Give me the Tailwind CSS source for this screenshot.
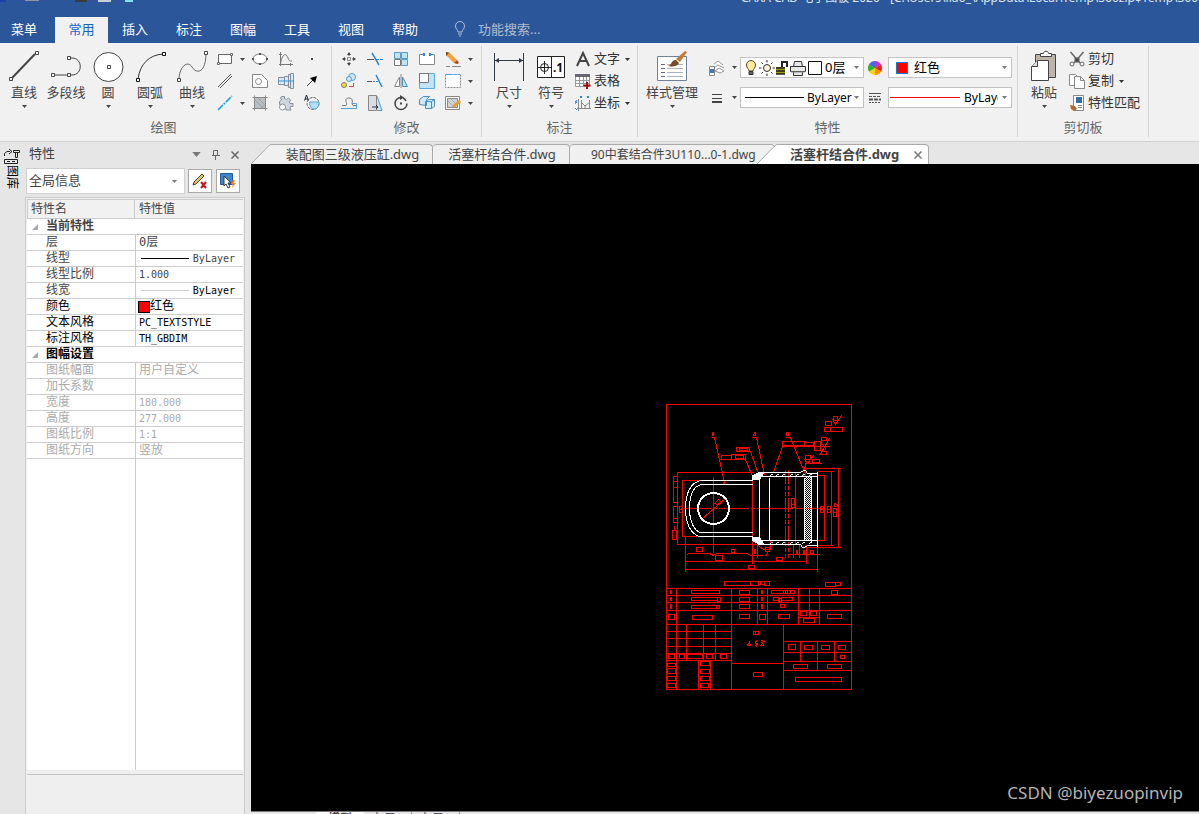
<!DOCTYPE html>
<html lang="zh-CN">
<head>
    <meta charset="UTF-8">
    <meta name="viewport" content="width=device-width, initial-scale=1.0">
    <title>CAXA CAD 电子图板 2020</title>
    <script src="https://cdn.jsdelivr.net/npm/@tailwindcss/browser@4"></script>
</head>
<body class="h-screen flex flex-col overflow-hidden bg-[#e6e6e6] text-[13px] leading-5 text-[#444] font-['Noto_Sans','Noto_Sans_CJK_SC',sans-serif]">
    <svg class="hidden">
        <symbol id="down" viewBox="0 0 5 3"><path d="M0 0h5L2.500 3z" fill="currentColor"/></symbol>
    </svg>

    <header class="bg-[#2b579a] text-white shrink-0">
        <div class="h-[17px] flex items-start justify-between">
            <div class="flex items-start h-[2px] overflow-hidden">
                <span class="w-[6px] h-[2px] bg-[#1c3fa8]"></span>
                <span class="w-[14px] h-px bg-[#8d97a8] ml-[19px]"></span>
                <span class="w-[12px] h-[2px] bg-[#3a3a3a] ml-[36px]"></span>
                <span class="w-[13px] h-[2px] bg-[#c9ced6] ml-[11px]"></span>
                <span class="w-[8px] h-[2px] bg-[#7fe3f5] ml-[14px]"></span>
            </div>
            <div class="w-[458px] h-[6px] flex items-end overflow-hidden text-xs whitespace-nowrap text-[#dfe6f0]">CAXA CAD 电子图板 2020 - [C:\Users\liao_\AppData\Local\Temp\360zip$Temp\360$5\活塞杆结合件.dwg]</div>
        </div>
        <nav class="flex h-[26px] leading-[22px]">
            <button class="w-[55px] pl-[11px] pb-[2px] text-left">菜单</button>
            <button class="w-[53px] pb-[2px] bg-[#f1f1f1] text-[#1a63c4]">常用</button>
            <button class="w-[54px] pb-[2px]">插入</button>
            <button class="w-[54px] pb-[2px]">标注</button>
            <button class="w-[54px] pb-[2px]">图幅</button>
            <button class="w-[54px] pb-[2px]">工具</button>
            <button class="w-[54px] pb-[2px]">视图</button>
            <button class="w-[54px] pb-[2px]">帮助</button>
            <label class="flex items-center pl-[22px] pb-[2px] gap-3">
                <svg class="w-3 h-4" viewBox="0 0 12 16" fill="none" stroke="#b4c0d4"><path d="M4 11c0-2-2.500-3-2.500-6a4.500 4.500 0 0 1 9 0c0 3-2.500 4-2.500 6zM4 13h4M5 15h2"/></svg>
                <input type="text" placeholder="功能搜索..." class="w-40 h-6 bg-transparent outline-none placeholder:text-[#b4bccb]">
            </label>
        </nav>
    </header>

    <section class="h-[99px] shrink-0 flex bg-[#f1f1f1] border-b border-[#d2d2d2] pt-[3px] pb-1">
        <!-- 绘图 -->
        <div class="w-[332px] shrink-0 border-r border-[#d2d2d2] flex flex-col">
            <div class="flex h-[70px] pl-[3px] pt-[2px]">
                <button class="w-[42px] pt-[2px] flex flex-col items-center whitespace-nowrap">
                    <svg class="w-8 h-8" viewBox="0 0 32 32" fill="#fff" stroke="#444"><path d="M4 28L27 4" stroke-width="2"/><path d="M1.500 27.500h3v3h-3zM27.500 1.500h3v3h-3z"/></svg>
                    <span>直线</span>
                    <svg class="w-[5px] h-[3px] mt-[3px]"><use href="#down"/></svg>
                </button>
                <button class="w-[42px] pt-[2px] flex flex-col items-center whitespace-nowrap">
                    <svg class="w-8 h-8" viewBox="0 0 32 32" fill="none" stroke="#444"><path d="M3 25H19M19 8h3c11 0 11 17 0 17h-3"/><path fill="#fff" d="M1.500 23.500h3v3h-3zM17.500 23.500h3v3h-3zM17.500 6.500h3v3h-3z"/></svg>
                    <span>多段线</span>
                </button>
                <button class="w-[42px] pt-[2px] flex flex-col items-center whitespace-nowrap">
                    <svg class="w-8 h-8" viewBox="0 0 32 32" fill="#fff" stroke="#444"><circle cx="16.500" cy="17" r="14.500"/><path d="M15.500 15.500h3v3h-3z"/></svg>
                    <span>圆</span>
                    <svg class="w-[5px] h-[3px] mt-[3px]"><use href="#down"/></svg>
                </button>
                <button class="w-[42px] pt-[2px] flex flex-col items-center whitespace-nowrap">
                    <svg class="w-8 h-8" viewBox="0 0 32 32" fill="none" stroke="#333"><path d="M4 29C6 14 15 5 29 4"/><path fill="#fff" stroke="#111" d="M2.500 28.500h3v3h-3zM28.500 2.500h3v3h-3z"/></svg>
                    <span>圆弧</span>
                    <svg class="w-[5px] h-[3px] mt-[3px]"><use href="#down"/></svg>
                </button>
                <button class="w-[42px] pt-[2px] flex flex-col items-center whitespace-nowrap">
                    <svg class="w-8 h-8" viewBox="0 0 32 32" fill="none" stroke="#666"><path d="M3 30C3 16 12 10 16 17S30 24 30 3"/><path fill="#fff" stroke="#444" d="M1.500 28.500h3v3h-3zM28.500 1.500h3v3h-3z"/></svg>
                    <span>曲线</span>
                    <svg class="w-[5px] h-[3px] mt-[3px]"><use href="#down"/></svg>
                </button>
                <div class="grid grid-cols-[35px_26px_26px_26px] grid-rows-3 h-[66px] pl-1">
                    <button class="flex items-center gap-[7px]">
                        <svg class="w-4 h-4" viewBox="0 0 16 16" fill="#fff" stroke="#666"><path d="M1.500 3.500h13v9h-13z"/><path d="M.5 11.500h2v2h-2zM13.500 2.500h2v2h-2z"/></svg>
                        <svg class="w-[5px] h-[3px]"><use href="#down"/></svg>
                    </button>
                    <button><svg class="w-4 h-4" viewBox="0 0 16 16" fill="#fff" stroke="#777"><ellipse cx="8" cy="8" rx="7" ry="5"/><path fill="#555" stroke="none" d="M0 7h2v2H0zM14 7h2v2h-2zM7 2h2v2H7zM7 12h2v2H7z"/></svg></button>
                    <button><svg class="w-4 h-4" viewBox="0 0 16 16" fill="none" stroke="#777"><path d="M2.500 1v14M1 13.500h14M1 3.500h3M12.500 12v3M2.500 13C4 3 8 1 10 7c1 3 2 3 4 3"/></svg></button>
                    <button><svg class="w-4 h-4" viewBox="0 0 16 16" fill="#444"><path d="M7 7h2v2H7z"/></svg></button>
                    <button><svg class="w-4 h-4" viewBox="0 0 16 16" fill="none" stroke="#555"><path d="M1 14L14 1M3 15L15 3"/></svg></button>
                    <button><svg class="w-4 h-4" viewBox="0 0 16 16" fill="#fff" stroke="#888"><path d="M.5 1.500h9l6 6v7H.5z"/><circle cx="6.500" cy="8.500" r="3"/></svg></button>
                    <button><svg class="w-4 h-4" viewBox="0 0 16 16" fill="#d5eaf8" stroke="#84909c"><path d="M.5 4.500h6v7h-6zM6.500 3.500h4v9h-4zM10.500 1.500h2v13h-2zM12.500 .5h3v15h-3z"/><path d="M0 8h16" stroke="#3b95d6"/></svg></button>
                    <button><svg class="w-4 h-4" viewBox="0 0 16 16"><path d="M3 13l6-6" stroke="#444"/><path d="M13 3L11 10 6 5z"/></svg></button>
                    <button class="flex items-center gap-[7px]">
                        <svg class="w-4 h-4" viewBox="0 0 16 16" fill="none" stroke="#0c9be0" stroke-width="1.500"><path d="M1 15L15 1" stroke-dasharray="7 1 2 1"/></svg>
                        <svg class="w-[5px] h-[3px]"><use href="#down"/></svg>
                    </button>
                    <button><svg class="w-4 h-4" viewBox="0 0 16 16" fill="#b9bec2" stroke="#888"><path d="M2.500 2.500h11v11h-11zM.5 2.500h15M.5 13.500h15M2.500 .5v15M13.500 .5v15"/><path d="M3 5l8 8M6 3l7 7M9 13l4-4" stroke="#9da3a7"/></svg></button>
                    <button><svg class="w-4 h-4" viewBox="0 0 16 16" fill="#cfd6de" stroke="#8a939c"><path d="M3.500 1.500h3v2l2 1 2-1.500 2 2-1 2 .5 1.500h3v3h-2.500l-.5 1.500 1 2H8c0-3-1.500-5-4-5L1.500 9.500V6.500l2-1.500-1-2z"/><circle cx="4.500" cy="12" r="3" fill="#fff"/></svg></button>
                    <button><svg class="w-4 h-4" viewBox="0 0 16 16" fill="none" stroke="#666"><circle cx="9" cy="8.500" r="6" stroke-dasharray="3 1"/><path d="M5.500 7h9.500c0 5-2 7-5 7s-4.500-3-4.500-7z" fill="#aee0f7" stroke="#5fa8cf"/><path d="M.5 5.500L2.500 0l2 5.500M1 4h3" stroke="#222"/></svg></button>
                </div>
            </div>
            <div class="text-center text-[#666] pt-[2px] pr-1">绘图</div>
        </div>

        <!-- 修改 -->
        <div class="w-[150px] shrink-0 border-r border-[#d2d2d2] flex flex-col">
            <div class="flex h-[70px] pl-[9px] pt-[2px]">
                <div class="grid grid-cols-[26px_26px_26px_26px_23px] grid-rows-3 h-[66px] justify-items-start">
                    <button><svg class="w-4 h-4" viewBox="0 0 16 16" fill="none" stroke="#555"><path d="M6.500 6.500h3v3h-3z" stroke="#888"/><path d="M8 2v3M8 11v3M2 8h3M11 8h3"/><path fill="#444" stroke="none" d="M6 4l2-3 2 3zM6 12l2 3 2-3zM4 6L1 8l3 2zM12 6l3 2-3 2z"/></svg></button>
                    <button><svg class="w-4 h-4" viewBox="0 0 16 16" fill="none" stroke="#2f86cf"><path d="M0 8.500h7" stroke="#555"/><path d="M5 2l7 12" stroke-width="1.500"/><path d="M9 8.500h7" stroke-dasharray="3 1"/></svg></button>
                    <button><svg class="w-4 h-4" viewBox="0 0 16 16" fill="#bfe3f7" stroke="#5a9cc8"><path d="M1.500 1.500h6v6h-6zM8.500 1.500h6v6h-6zM8.500 8.500h6v6h-6z"/><path d="M1.500 8.500h6v6h-6z" fill="#fff" stroke="#777"/></svg></button>
                    <button><svg class="w-4 h-4" viewBox="0 0 16 16" fill="#fff" stroke="#888"><path d="M3 3.500H.5v10h15v-10H13"/><path d="M2 3.500h3M11 3.500h3" stroke="#2f86cf"/><path d="M4 2h2v3H4zM10 2h2v3h-2z" fill="#2f86cf" stroke="none"/></svg></button>
                    <button><svg class="w-4 h-4" viewBox="0 0 16 16"><path d="M1 1l3 0 8 8-3 3-8-8z" fill="#f0a23a"/><path d="M1 1v4l3-3z" fill="#6a4a2a"/><path d="M9 12l3-3 2 3-2 1z" fill="#a3482d"/><path d="M1 15.500h4M7 15.500h9" stroke="#888"/></svg></button>

                    <button><svg class="w-4 h-4" viewBox="0 0 16 16" fill="#cfeafa" stroke="#4f9fd0"><circle cx="11" cy="4" r="3.500"/><circle cx="8" cy="6" r="2.500"/><circle cx="3" cy="12" r="2.500" fill="#f5e320" stroke="#777"/><path d="M8 13.500h4.500V10" fill="none" stroke="#c44"/></svg></button>
                    <button><svg class="w-4 h-4" viewBox="0 0 16 16" fill="none" stroke="#555"><path d="M0 8.500h5"/><path d="M6 8.500h6" stroke="#2f86cf" stroke-dasharray="2 1"/><path d="M9 2l6 12" stroke="#2f86cf" stroke-width="1.500"/></svg></button>
                    <button><svg class="w-4 h-4" viewBox="0 0 16 16" fill="#fff" stroke="#888"><path d="M6.500 4v9.500h-5zM8 1v14"/><path d="M9.500 4v9.500h5z" fill="#bfe3f7" stroke="#4f8db8"/></svg></button>
                    <button><svg class="w-4 h-4" viewBox="0 0 16 16" fill="#bfe3f7" stroke="#5aa9d6"><path d="M.5 .5h15v15H.5z"/><path d="M.5 .5h9v9h-9z" fill="#fff" stroke="#777"/></svg></button>
                    <button><svg class="w-4 h-4" viewBox="0 0 16 16" fill="#fff" stroke="#888"><path d="M.5 1.500h15v13H.5z" stroke-dasharray="2 1"/><path d="M1 1.500h14" stroke="#4fa8e0" stroke-dasharray="3 1"/></svg></button>

                    <button><svg class="w-4 h-4" viewBox="0 0 16 16" fill="none" stroke="#777"><path d="M1 10.500h4c2-2-1-4 0-6s5-2 6 0-1 4 1 6h3"/><path d="M0 13.500h15.500v-5H11" stroke="#4f9fd0"/></svg></button>
                    <button><svg class="w-4 h-4" viewBox="0 0 16 16" fill="#d9dee2" stroke="#888"><path d="M1.500 .5h8v15h-8z"/><path d="M10 1l5 14.500h-5" fill="#bfe3f7" stroke="#4f9fd0"/><path d="M5 12h6M9 10l2 2-2 2" fill="none" stroke="#333"/></svg></button>
                    <button><svg class="w-4 h-4" viewBox="0 0 16 16" fill="none" stroke="#444"><path d="M8 2.500a6 6 0 1 0 6 6M10 3a6 6 0 0 1 3 3" stroke-width="1.500"/><path d="M7 0l4 2.500L7 5zM7 7.500h2v2H7z" fill="#444" stroke="none"/></svg></button>
                    <button><svg class="w-4 h-4" viewBox="0 0 16 16" fill="#cfeafa" stroke="#4f8db8"><path d="M.5 4.500l4-3h6l-3 3v6l-7-1zM6.500 6.500h6v7h-6zM12.500 6.500l3-2v7l-3 2M6.500 6.500l3-2h6"/></svg></button>
                    <button><svg class="w-4 h-4" viewBox="0 0 16 16" fill="#d0d3d5" stroke="#888"><path d="M.5 1.500h14v13H.5z" fill="#fff"/><path d="M2.500 3.500h10v9h-10z"/><path d="M3 6l6 6M6 4l6 6" stroke="#aaa"/><path d="M7 11l7-6 2 2-7 6z" fill="#e79b35" stroke="none"/></svg></button>
                </div>
                <div class="grid grid-rows-3 h-[66px]">
                    <button aria-label="删除选项"><svg class="w-[5px] h-[3px]"><use href="#down"/></svg></button>
                    <button aria-label="打断选项"><svg class="w-[5px] h-[3px]"><use href="#down"/></svg></button>
                    <button aria-label="编辑选项"><svg class="w-[5px] h-[3px]"><use href="#down"/></svg></button>
                </div>
            </div>
            <div class="text-center text-[#666] pt-[2px]">修改</div>
        </div>

        <!-- 标注 -->
        <div class="w-[156px] shrink-0 border-r border-[#d2d2d2] flex flex-col">
            <div class="flex h-[70px] pl-[6px] pt-[2px]">
                <button class="w-[42px] pt-[2px] flex flex-col items-center">
                    <svg class="w-8 h-8" viewBox="0 0 32 32" fill="none" stroke="#333a48"><path d="M1.500 3v28M30.500 3v28M2 10.500h28"/><path d="M6 8l-4 2.500L6 13zM26 8l4 2.500-4 2.500z" fill="#333a48" stroke="none"/></svg>
                    <span>尺寸</span>
                    <svg class="w-[5px] h-[3px] mt-[3px]"><use href="#down"/></svg>
                </button>
                <button class="w-[42px] pt-[2px] flex flex-col items-center">
                    <svg class="w-8 h-8" viewBox="0 0 32 32" fill="#fff" stroke="#222"><path d="M2.500 6.500h27v21h-27zM16.500 6.500v21"/><circle cx="9.500" cy="17.500" r="4"/><path d="M3 17.500h13M9.500 11v13"/><text x="18" y="22" font-size="12" font-weight="bold" fill="#111" stroke="none">.1</text></svg>
                    <span>符号</span>
                    <svg class="w-[5px] h-[3px] mt-[3px]"><use href="#down"/></svg>
                </button>
                <div class="grid grid-rows-3 h-[66px] pl-[3px] text-[#333]">
                    <button class="flex items-center gap-[3px]">
                        <svg class="w-4 h-4" viewBox="0 0 16 16" fill="none" stroke="#444" stroke-width="2"><path d="M2 15L8 2l6 13M4 10h8"/></svg>
                        <span class="pb-[2px]">文字</span>
                        <svg class="w-[5px] h-[3px] ml-[2px]"><use href="#down"/></svg>
                    </button>
                    <button class="flex items-center gap-[3px]">
                        <svg class="w-4 h-4" viewBox="0 0 16 16" fill="#fff" stroke="#999"><path d="M.5 1.500h14v12H.5zM.5 7.500h14M.5 10.500h14M4.500 4v10M8.500 4v10M11.500 4v6"/><path d="M0 1h15v3H0z" fill="#667" stroke="none"/><path d="M12 9v7M8.500 12.500h7" stroke="#a01010" stroke-width="2"/></svg>
                        <span class="pb-[2px]">表格</span>
                    </button>
                    <button class="flex items-center gap-[3px]">
                        <svg class="w-4 h-4" viewBox="0 0 16 16" fill="none" stroke="#888"><path d="M3.500 4v12M2 13.500h14M6.500 5v9M14.500 5v9M6 7l4 4 5-4M10 11v3"/><path d="M5 1l2 2M7 1L5 3M12 1l2 2M14 1l-2 2M0 6l2 2M2 5L0 9M0 13l2 2" stroke="#2f86cf"/></svg>
                        <span class="pb-[2px]">坐标</span>
                        <svg class="w-[5px] h-[3px] ml-[2px]"><use href="#down"/></svg>
                    </button>
                </div>
            </div>
            <div class="text-center text-[#666] pt-[2px]">标注</div>
        </div>

        <!-- 特性 -->
        <div class="w-[380px] shrink-0 border-r border-[#d2d2d2] flex flex-col">
            <div class="flex h-[70px] pl-2 pt-[2px]">
                <button class="w-[52px] pt-[2px] flex flex-col items-center whitespace-nowrap">
                    <svg class="w-8 h-8" viewBox="0 0 32 32" fill="#fff" stroke="#6d8296"><path d="M1.500 6.500h29v24h-29z"/><path d="M5 14.500h4M5 18.500h4M5 22.500h4M5 26.500h4" stroke="#667"/><path d="M11 14.500h16M11 18.500h16M11 22.500h16M11 26.500h16" stroke="#aab4c8"/><path d="M20 9l9-8 2 1-7 10z" fill="#c47a35" stroke="none"/><path d="M12 16c4-1 3-6 8-6l3 3c-2 4-7 4-11 3z" fill="#7a4a20" stroke="none"/></svg>
                    <span>样式管理</span>
                    <svg class="w-[5px] h-[3px] mt-[3px]"><use href="#down"/></svg>
                </button>
                <div class="flex flex-col gap-[9px] pt-[9px] pl-[11px]">
                    <div class="flex items-center h-[21px]">
                        <button class="flex items-center gap-[7px] w-[31px]">
                            <svg class="w-4 h-4" viewBox="0 0 16 16" fill="#fff" stroke="#999"><path d="M5 4l4-3 5 4M5 8l4-3 6 3M6 11l4-3 5 3-4 2z"/><path d="M.5 6.500h5v9h-5z" stroke="#889"/><path d="M1 9h4v4H1z" fill="#3b78b8" stroke="none"/></svg>
                            <svg class="w-[5px] h-[3px]"><use href="#down"/></svg>
                        </button>
                        <div class="w-[124px] h-[21px] flex items-center bg-white border border-[#c3c3c3] pl-[3px] pr-1">
                            <svg class="w-[14px] h-4 shrink-0" viewBox="0 0 14 16" fill="#ffeaa0" stroke="#5a4a20"><path d="M5 11c0-2-2.500-3-2.500-6a4.500 4.500 0 0 1 9 0c0 3-2.500 4-2.500 6z"/><path d="M5 11.500h4v3H5z" fill="#666" stroke="#333"/></svg>
                            <svg class="w-4 h-4 shrink-0 ml-px" viewBox="0 0 16 16" fill="#fff3d6" stroke="#333"><circle cx="8" cy="8" r="3.500"/><path d="M8 0v2.500M8 13.500V16M0 8h2.500M13.500 8H16M2.500 2.500L4 4M12 12l1.500 1.500M2.500 13.500L4 12M12 4l1.500-1.500"/></svg>
                            <svg class="w-[14px] h-4 shrink-0" viewBox="0 0 14 16" fill="none" stroke="#222" stroke-width="2"><path d="M7 7V2h5v5"/><path d="M1 7h9v7H1z" fill="#9a9a10" stroke="none"/><path d="M1 8h9M1 11h9M1 14h9" stroke-width="1.500"/></svg>
                            <svg class="w-4 h-4 shrink-0 ml-px" viewBox="0 0 16 16" fill="#e8e8e8" stroke="#333"><path d="M3.500 6.500l1-5h7l1 5M.5 6.500h15v5H.5zM3.500 11.500h9v4h-9z"/><path d="M1 12h14" stroke="#888"/></svg>
                            <svg class="w-4 h-4 shrink-0 ml-px" viewBox="0 0 16 16" fill="#fff" stroke="#111"><path d="M1.500 1.500h13v13h-13z"/></svg>
                            <select aria-label="图层" class="appearance-none flex-1 min-w-0 h-[19px] pl-[2px] leading-[19px] text-black bg-transparent"><option>0层</option></select>
                            <svg class="w-[5px] h-[3px] shrink-0 text-[#777]"><use href="#down"/></svg>
                        </div>
                        <button aria-label="颜色" class="w-6 pr-[2px] flex justify-center">
                            <svg class="w-4 h-4" viewBox="0 0 16 16"><circle cx="8" cy="8" r="7" fill="#ffd400"/><path d="M8 8V1a7 7 0 0 1 6 3.500z" fill="#d42ad0"/><path d="M8 8l6-3.500a7 7 0 0 1 0 7z" fill="#f02020"/><path d="M8 8l6 3.500A7 7 0 0 1 8 15z" fill="#ff8c00"/><path d="M8 8L2 11.500a7 7 0 0 1 0-7z" fill="#27b43a"/><path d="M8 8L2 4.500A7 7 0 0 1 8 1z" fill="#4565f0"/></svg>
                        </button>
                        <div class="w-[124px] h-[21px] flex items-center bg-white border border-[#c3c3c3] pl-[7px] pr-1">
                            <span class="w-3 h-3 bg-[#ff0000] border border-[#1c78c8] shrink-0"></span>
                            <select aria-label="当前颜色" class="appearance-none flex-1 min-w-0 h-[19px] pl-[6px] leading-[19px] text-black bg-transparent"><option>红色</option></select>
                            <svg class="w-[5px] h-[3px] shrink-0 text-[#777]"><use href="#down"/></svg>
                        </div>
                    </div>
                    <div class="flex items-center h-[21px]">
                        <button class="flex items-center gap-[7px] w-[31px]">
                            <svg class="w-4 h-4" viewBox="0 0 16 16" stroke="#444"><path d="M3 4.500h10M3 8.500h10"/><path d="M3 12h10" stroke-width="2"/></svg>
                            <svg class="w-[5px] h-[3px]"><use href="#down"/></svg>
                        </button>
                        <div class="w-[124px] h-[21px] flex items-center bg-white border border-[#c3c3c3] pl-1 pr-1">
                            <span class="w-[59px] h-px bg-black shrink-0"></span>
                            <select aria-label="线型" class="appearance-none flex-1 min-w-0 h-[19px] pl-[3px] text-xs leading-[19px] text-black bg-transparent"><option>ByLayer</option></select>
                            <svg class="w-[5px] h-[3px] shrink-0 text-[#777]"><use href="#down"/></svg>
                        </div>
                        <button aria-label="线宽" class="w-6 pr-[2px] flex justify-center">
                            <svg class="w-3 h-4" viewBox="0 0 12 16" stroke="#555"><path d="M0 3.500h12"/><path d="M0 6.500h12" stroke-dasharray="3 1"/><path d="M0 9.500h12" stroke-width="2" stroke-dasharray="4 1"/><path d="M0 12.500h12" stroke-dasharray="2 1"/></svg>
                        </button>
                        <div class="w-[124px] h-[21px] flex items-center bg-white border border-[#c3c3c3] pl-px pr-1">
                            <span class="w-[70px] h-px bg-[#ff0000] shrink-0"></span>
                            <select aria-label="线宽样式" class="appearance-none w-[38px] h-[19px] pl-1 text-xs leading-[19px] text-black bg-transparent"><option>ByLayer</option></select>
                            <svg class="w-[5px] h-[3px] shrink-0 ml-auto text-[#777]"><use href="#down"/></svg>
                        </div>
                    </div>
                </div>
            </div>
            <div class="text-center text-[#666] pt-[2px]">特性</div>
        </div>

        <!-- 剪切板 -->
        <div class="w-[131px] shrink-0 border-r border-[#d2d2d2] flex flex-col">
            <div class="flex h-[70px] pl-[5px] pt-[2px]">
                <button class="w-[42px] pt-[2px] flex flex-col items-center">
                    <svg class="w-8 h-8" viewBox="0 0 32 32" fill="#bdb4aa" stroke="#444"><path d="M7.500 4.500h20v23h-20z"/><path d="M12.500 6.500v-3h3c0-3 5-3 5 0h3v3z" fill="#fff"/><path d="M9.500 10.500h11v20h-17v-14z" fill="#fff"/><path d="M9.500 10.500v6h-6" fill="#ddd"/></svg>
                    <span>粘贴</span>
                    <svg class="w-[5px] h-[3px] mt-[3px]"><use href="#down"/></svg>
                </button>
                <div class="grid grid-rows-3 h-[66px] pl-1 text-[#333]">
                    <button class="flex items-center gap-[3px]">
                        <svg class="w-4 h-4" viewBox="0 0 16 16" fill="none" stroke="#666"><path d="M1.500 1L11 12M14.500 1L5 12" stroke-width="1.500"/><circle cx="3" cy="13" r="2"/><circle cx="13" cy="13" r="2"/><path d="M6 7h4v4H6z" fill="#444"/></svg>
                        <span class="pb-[2px]">剪切</span>
                    </button>
                    <button class="flex items-center gap-[3px]">
                        <svg class="w-4 h-4" viewBox="0 0 16 16" fill="#fff" stroke="#888"><path d="M.5 1.500h6l3 3v8h-9z"/><path d="M5.500 3.500h6l4 4v8h-10zM11.500 3.500v4h4"/></svg>
                        <span class="pb-[2px]">复制</span>
                        <svg class="w-[5px] h-[3px] ml-[2px]"><use href="#down"/></svg>
                    </button>
                    <button class="flex items-center gap-[3px]">
                        <svg class="w-4 h-4" viewBox="0 0 16 16" fill="#fff" stroke="#888"><path d="M4.500 .5h10v15h-10z"/><path d="M7 2h6v6H7z" fill="#2f6ea8" stroke="none"/><path d="M9 10.500h4M9 12.500h4"/><path d="M1 10l5 1 2 3-3 2-3-2z" fill="#b8672c" stroke="none"/></svg>
                        <span class="pb-[2px]">特性匹配</span>
                    </button>
                </div>
            </div>
            <div class="text-center text-[#666] pt-[2px]">剪切板</div>
        </div>
    </section>

    <main class="flex flex-1 min-h-0">
        <div class="w-[25px] shrink-0 pt-[7px] pl-1">
            <button class="w-4 flex flex-col items-center text-black">
                <svg class="w-4 h-4" viewBox="0 0 16 16" fill="none" stroke="#222"><path d="M.5 7V4.500L3 2.500h3M5 0l3 2.500L5 5M9.500 1.500h6v2h-6zM11.500 3.500v5h2v-5M.5 10.500h13v4H.5zM3 12.500h3M8 12.500h3"/></svg>
                <span class="text-xs leading-4 [writing-mode:vertical-rl] [text-orientation:sideways]">图库</span>
            </button>
        </div>

        <aside class="w-[220px] shrink-0 flex flex-col">
            <div class="h-[25px] flex items-center pl-1 pr-px">
                <h2 class="flex-1 pb-[3px]">特性</h2>
                <button aria-label="菜单" class="w-[19px] flex justify-center"><svg class="w-[9px] h-[5px] text-[#777]"><use href="#down"/></svg></button>
                <button aria-label="固定" class="w-[19px] flex justify-center"><svg class="w-[10px] h-[10px]" viewBox="0 0 10 10" fill="none" stroke="#666"><path d="M2.500 5.500v-5h4v5M6.500 0v5M1 5.500h8M4.500 6v4"/></svg></button>
                <button aria-label="关闭" class="w-[19px] flex justify-center"><svg class="w-2 h-2" viewBox="0 0 8 8" stroke="#666" stroke-width="1.500"><path d="M.5 .5l7 7M7.500 .5l-7 7"/></svg></button>
            </div>
            <div class="flex items-center h-7 pl-px gap-[3px]">
                <div class="w-[159px] h-[26px] flex items-center bg-white border border-[#d0d0d0] pl-[2px] pr-[7px]">
                    <select aria-label="对象" class="appearance-none flex-1 pb-[2px] leading-5 bg-transparent"><option>全局信息</option></select>
                    <svg class="w-[5px] h-[3px] text-[#777]"><use href="#down"/></svg>
                </div>
                <button aria-label="取消选择" class="w-6 h-6 bg-white border border-[#aaa] flex items-center justify-center">
                    <svg class="w-4 h-4" viewBox="0 0 16 16"><path d="M1 12l1-3 8-8 2 2-8 8z" fill="#f0c060" stroke="#444"/><path d="M9 9l5 6M14 9l-5 6" stroke="#c21818" stroke-width="2"/></svg>
                </button>
                <button aria-label="快速选择" class="w-6 h-6 ml-px bg-white border border-[#aaa] flex items-center justify-center">
                    <svg class="w-4 h-4" viewBox="0 0 16 16"><path d="M.5 .5h12v11H.5z" fill="#3f87cc" stroke="#235a94"/><path d="M4 3v10l2-2 2 4 2-1-2-4h3z" fill="#fff" stroke="#333"/><path d="M13 7l-2 4h2l-1 4 4-5h-2l1-3z" fill="#f08a20"/></svg>
                </button>
            </div>
            <div class="flex-1 min-h-0 mt-[2px] flex flex-col border-x border-t border-[#ccc] bg-[#efefef] px-px pt-px">
                <table class="w-full table-fixed border-separate border-spacing-0 bg-white text-xs leading-[15px] font-['DejaVu_Sans_Mono','Noto_Sans_CJK_SC',monospace] [&_td]:border-b [&_td]:border-[#ccc] [&_td]:p-0 [&_td]:whitespace-nowrap [&_td:first-child]:pl-[19px] [&_td+td]:border-l [&_td+td]:pl-[3px]">
                    <colgroup><col class="w-[108px]"><col></colgroup>
                    <thead>
                        <tr class="text-left bg-[#f1f1f1]">
                            <th class="font-normal leading-[18px] h-5 border border-[#ccc] pl-[3px]">特性名</th>
                            <th class="font-normal leading-[18px] border-y border-[#ccc] pl-1">特性值</th>
                        </tr>
                    </thead>
                    <tbody>
                        <tr class="font-bold"><td colspan="2"><span class="inline-block w-[14px] -ml-[14px]"><svg class="w-[6px] h-[6px] inline-block" viewBox="0 0 6 6"><path d="M6 0v6H0z" fill="#aaa"/></svg></span>当前特性</td></tr>
                        <tr><td>层</td><td>0层</td></tr>
                        <tr><td>线型</td><td class="text-[10px]"><div class="flex items-center justify-between pl-[2px] pr-2"><span class="w-12 h-px bg-black"></span>ByLayer</div></td></tr>
                        <tr><td>线型比例</td><td class="text-[10px]">1.000</td></tr>
                        <tr><td>线宽</td><td class="text-[10px] text-black"><div class="flex items-center justify-between pl-[2px] pr-2"><span class="w-12 h-px bg-[#ccc]"></span>ByLayer</div></td></tr>
                        <tr class="text-black"><td>颜色</td><td><div class="flex items-center -ml-px"><span class="w-3 h-3 bg-[#ff0000] border border-black"></span>红色</div></td></tr>
                        <tr class="text-black"><td>文本风格</td><td class="text-[10px]">PC_TEXTSTYLE</td></tr>
                        <tr class="text-black"><td>标注风格</td><td class="text-[10px]">TH_GBDIM</td></tr>
                        <tr class="font-bold text-black"><td colspan="2"><span class="inline-block w-[14px] -ml-[14px]"><svg class="w-[6px] h-[6px] inline-block" viewBox="0 0 6 6"><path d="M6 0v6H0z" fill="#aaa"/></svg></span>图幅设置</td></tr>
                        <tr class="text-[#aaa]"><td>图纸幅面</td><td>用户自定义</td></tr>
                        <tr class="text-[#aaa]"><td>加长系数</td><td></td></tr>
                        <tr class="text-[#aaa]"><td>宽度</td><td class="text-[10px]">180.000</td></tr>
                        <tr class="text-[#aaa]"><td>高度</td><td class="text-[10px]">277.000</td></tr>
                        <tr class="text-[#aaa]"><td>图纸比例</td><td class="text-[10px]">1:1</td></tr>
                        <tr class="text-[#aaa]"><td>图纸方向</td><td>竖放</td></tr>
                    </tbody>
                </table>
                <div class="flex-1 bg-white flex"><div class="w-[109px] border-r border-[#ccc]"></div></div>
                <div class="h-11 shrink-0 pt-1"><div class="border-t border-[#c4c4c4]"></div></div>
            </div>
        </aside>

        <section class="flex-1 min-w-0 flex flex-col pl-[6px]">
            <div class="h-[22px] shrink-0 flex pt-[2px] leading-[19px] whitespace-nowrap" role="tablist">
                <svg class="w-5 h-5 shrink-0" viewBox="0 0 20 20"><path d="M0 20L18 1.500 20 .5V20z" fill="#f0f0f0"/><path d="M0 20L18 1.500 20 .5" fill="none" stroke="#aaa"/></svg>
                <button class="w-[162px] shrink-0 bg-[#f0f0f0] border-t border-r border-[#aaa] rounded-tr-sm pl-[2px]">装配图三级液压缸.dwg</button>
                <button class="w-[137px] shrink-0 bg-[#f0f0f0] border-t border-r border-[#aaa] rounded-t-sm pl-[2px]">活塞杆结合件.dwg</button>
                <button class="w-[187px] shrink-0 bg-[#f0f0f0] border-t border-[#aaa] rounded-tl-sm text-left text-xs leading-[19px] pl-[21px]">90中套结合件3U110...0-1.dwg</button>
                <svg class="w-5 h-5 shrink-0" viewBox="0 0 20 20"><path d="M0 .5h20V20H0z" fill="#f0f0f0"/><path d="M0 20L18 1.500 20 .5V20z" fill="#fff"/><path d="M0 .5h15l3 2M0 20L18 1.500 20 .5" fill="none" stroke="#aaa"/></svg>
                <button class="w-[152px] shrink-0 bg-white border-t border-r border-[#aaa] rounded-tr-sm flex items-center justify-between pl-[13px] pr-[6px] font-bold">活塞杆结合件.dwg
                    <svg class="w-2 h-2" viewBox="0 0 8 8" stroke="#777" stroke-width="1.500"><path d="M.5 .5l7 7M7.500 .5l-7 7"/></svg>
                </button>
            </div>

            <div class="relative flex-1 min-h-0 bg-black overflow-hidden">
                <svg class="absolute left-[409px] top-[234px] w-[200px] h-[300px]" viewBox="0 0 200 300" fill="none" shape-rendering="crispEdges">
                    <g transform="translate(.5 .5)" stroke="#f00">
                        <!-- sheet frame -->
                        <path d="M6 6h185v285H6z"/>
                        <!-- surface marks and leaders -->
                        <path d="M165 23h6v4h-6zM173 18h4v4h-4zM172 21l3 5 6-9M164 29h18v4h-18zM170 29v4"/>
                        <path d="M51 39h3l10 45M91 39h5l8 38M125 39h5l17 42"/>
                        <path d="M52 34h1v3h-1zM94 34h1v3h-2zM126 34h2v3h-2zM63 84h1v2h-1z"/>
                        <path d="M76 49h13v4h-13zM79 50h8v2h-8zM75 53h15l8 22M61 57h10v4h-10zM71 56h14v5h-14zM75 57h8v3h-8zM59 61h26l7 17"/>
                        <path d="M144 43h-22v4h22M122 48h47M122 48l-9 26M144 44h9v3h-9zM154 43h6v9h-6zM161 39h5v3h-5zM161 53h5v3h-5zM169 40l-10 17M160 43l6 9"/>
                        <path d="M145 57h5v4h-5zM144 61l3 4 6-8M152 61h7v3h-7zM145 65h16M145 65l-2 13"/>
                        <!-- centre lines -->
                        <path d="M20 110h144" stroke-dasharray="30 2 4 2"/>
                        <path d="M53 78v76M92 78v87M135 74v71"/>
                        <path d="M125 71v88M128 71v88" stroke-dasharray="14 2 4 2 4 2"/>
                        <path d="M41 121l24-21M41 118v4h3M62 100h4M54 105l4-4 2 2-3 3zM131 100h3v9h-3zM131 106h3"/>
                        <!-- dimensions -->
                        <path d="M16 74h77M16 146h80M17 74v72M21 82h20M21 138h20M22 82v56"/>
                        <path d="M13 78h4v26h-4zM13 83h4M13 89h4M13 108h4v16h-4zM13 120h4M12 132h4v9h-4zM14 127v5M19 108h3v6h-3zM19 111h3"/>
                        <path d="M143 70h37M143 149h37M178 70v79M157 73h16M157 147h16M171 73v74M156 77h9M156 142h9M164 77v65"/>
                        <path d="M160 108h3v6h-3zM167 108h3v6h-3zM160 111h3M167 111h3M173 110h3v8h-3zM173 114h3M174 105v3h3v-2z"/>
                        <path d="M26 157l2-2h21l4 2 3-2h31l3 2h12M36 149h6v4h-6zM71 151h3v3h-3zM94 151h1v4h-1zM97 146v13"/>
                        <path d="M95 145l8 6h7v-9M105 149h4v4h-4zM108 153l-3 5"/>
                        <path d="M25 138v35M92 165v-3M25 163h121M146 146v19M55 157h7v5h-7zM116 159h6v3h-6zM25 171h132M157 149v24M88 167h6v3h-6z"/>
                        <path d="M128 156h31M133 146v13M139 146v13M136 152h1v4h-1zM143 152h1v3h-1zM150 152h3v3h-3z"/>
                        <!-- title block grid -->
                        <path d="M6 190h185M6 197h185M6 204h185M6 212h185M6 226h185M16 190v101M71 190v101M97 190v36M107 190v36M138 190v36M149 190v29M159 190v36M138 219h21"/>
                        <path d="M6 233h65M6 240h65M6 248h65M6 255h65M6 262h65M26 226v36M43 226v36M55 226v36M38 262v29M50 262v29"/>
                        <path d="M123 226v65M71 265h52M123 243h68M123 254h68M123 263h68M123 272h68M140 243v20M157 243v29M174 243v20"/>
                        <!-- title block text boxes -->
                        <path d="M64 183h26v4h-26zM90 183h8v4h-8zM98 183h6v3h-6zM100 183v3M104 183h5v4h-5zM165 184h10v4h-10zM175 184h5v3h-5z"/>
                        <path d="M10 192h1v3h-1zM10 199h1v3h-1zM10 206h1v4h-1zM101 192h1v3h-1zM101 199h1v3h-1zM101 206h1v4h-1z"/>
                        <path d="M31 192h28v3h-28zM31 199h26v3h-26zM57 199h3v4h-3zM31 207h28v3h-28zM56 207v3M79 192h10v4h-10zM79 199h10v4h-10zM79 206h10v4h-10z"/>
                        <path d="M111 192h23v3h-23zM123 192v3M125 192v3M127 192v3M130 192v3M113 199h6v3h-6zM118 200h3v3h-3zM121 199h11v3h-11zM120 206h4v3h-4zM171 192h6v4h-6z"/>
                        <path d="M8 216h6v5h-6zM32 217h20v4h-20zM79 216h10v4h-10zM99 216h6v5h-6zM118 216h11v4h-11zM140 213h6v4h-6zM150 213h6v4h-6zM143 220h11v4h-11zM167 216h14v4h-14z"/>
                        <path d="M8 256h6v4h-6zM19 256h5v4h-5zM27 256h15v4h-15zM46 256h6v4h-6zM60 256h6v4h-6z"/>
                        <path d="M7 265h8v3h-8zM7 270h8v5h-8zM7 278h8v4h-8zM7 285h8v4h-8zM40 263h9v4h-9zM40 271h9v4h-9zM40 278h9v4h-9zM40 285h8v4h-8z"/>
                        <path d="M93 233h5v3h-5zM95 233v3M93 274h9v4h-9zM128 246h7v5h-7zM144 247h8v4h-8zM161 247h8v4h-8zM178 247h7v4h-7zM180 257h4v3h-4zM133 266h14v4h-14zM167 266h14v4h-14zM135 279h46v4h-46z"/>
                        <path d="M89 242v3l-2 1v1h3v-2M97 242l-2 1v2h2l-1 2h-2M96 247v1M101 242l2 1-2 1 1 1-2 2h3v-2"/>
                    </g>
                    <g transform="translate(.5 .5)" stroke="#fff">
                        <!-- piston rod section -->
                        <path d="M92 82H40C29 85 25 97 25 110s4 25 14 28h53M92 86H41C32 88 29 98 29 110s4 22 11 24h52"/>
                        <circle cx="53" cy="110" r="15.500" stroke-width="2"/>
                        <path d="M92 77l5-2h6l-4 6h-7zM92 142l5 3h6l-4-6h-7z" fill="#fff"/>
                        <path d="M99 78v64M109 79v62M97 74h43M99 78h51M97 146h43M99 142h51M157 73v75M144 79v62M151 77v66"/>
                        <path d="M140 74l3-2h2l2 3h10M147 78h10M140 146l2 3h2l3-2h10M147 142h10M110 77l3-2M116 77l3-2M122 77l3-2M130 77l3-2M136 77l3-2M142 77l3-2M149 77l3-2M110 145l3-2M116 145l3-2M122 145l3-2M130 145l3-2M136 145l3-2M142 145l3-2M149 145l3-2"/>
                        <path d="M146 78v64M148 78v64M150 78v64" stroke-dasharray="1 1"/>
                        <path d="M145 79v64M147 79v64M149 79v64" stroke-dasharray="1 1"/>
                    </g>
                </svg>
                <p class="absolute right-4 bottom-1 text-[17px] leading-7 text-[#b4b4b4]">CSDN @biyezuopinvip</p>
            </div>

            <div class="h-[3px] shrink-0 flex overflow-hidden border-t border-[#777] pl-[65px] text-xs leading-[14px]">
                <button class="w-12 bg-white font-bold h-[14px]">模型</button>
                <button class="w-12 h-[14px] border-r border-[#999]">布局1</button>
                <button class="w-12 h-[14px] border-r border-[#999]">布局2</button>
            </div>
        </section>
    </main>
</body>
</html>
